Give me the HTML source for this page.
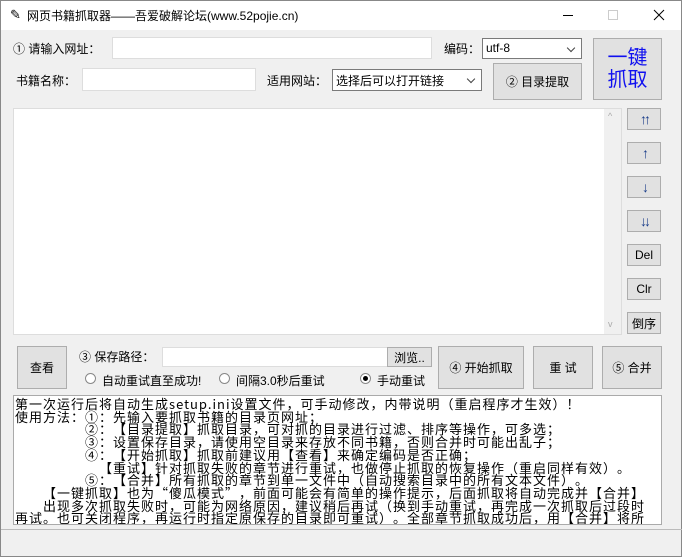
<!DOCTYPE html>
<html><head><meta charset="utf-8"><style>
*{box-sizing:border-box;margin:0;padding:0}
body{width:682px;height:557px;background:#f0f0f0;font-family:"Liberation Sans","Noto Sans CJK SC",sans-serif;font-size:12px;color:#000;position:relative;overflow:hidden;border:1px solid #888}
.a{position:absolute}
.tb{left:0;top:0;width:680px;height:29px;background:#fff}
.in{position:absolute;background:#fff;border:1px solid #7a7a7a}
.btn{position:absolute;background:#e1e1e1;border:1px solid #adadad;display:flex;align-items:center;justify-content:center;font-size:12px}
.sel{position:absolute;background:#fff;border:1px solid #7a7a7a;padding:2px 3px;font-size:12px}
.sel:after{content:"";position:absolute;right:7px;top:6px;width:5px;height:5px;border-right:1px solid #444;border-bottom:1px solid #444;transform:rotate(45deg)}
.rad{position:absolute;width:11px;height:11px;border:1px solid #888;border-radius:50%;background:#fff}
.ta{left:12px;top:394px;width:649px;height:130px;background:#fff;border:1px solid #aaa;font-family:"Noto Sans CJK SC",sans-serif;font-size:13px;line-height:12.7px;padding:2px 1px;white-space:pre;overflow:hidden;letter-spacing:1px;text-spacing-trim:space-all}
.arr{color:#1a3d8a;font-size:14px;font-weight:bold;letter-spacing:-3px}
</style></head><body>
<div class="a tb"></div>
<div class="a" style="left:9px;top:6px;font-size:13px">✎</div>
<div class="a" style="left:26px;top:6px;font-size:12px">网页书籍抓取器——吾爱破解论坛(www.52pojie.cn)</div>
<div class="a" style="left:562px;top:14px;width:10px;height:1px;background:#000"></div>
<div class="a" style="left:607px;top:9px;width:10px;height:10px;border:1px solid #ccc"></div>
<svg class="a" style="left:652px;top:8px" width="12" height="12"><path d="M1 1L11 11M11 1L1 11" stroke="#000" stroke-width="1"/></svg>

<div class="a" style="left:12px;top:39px">① 请输入网址：</div>
<div class="in" style="left:111px;top:36px;width:320px;height:22px;border-color:#ddd"></div>
<div class="a" style="left:443px;top:39px">编码：</div>
<div class="sel" style="left:481px;top:37px;width:100px;height:21px">utf-8</div>
<div class="btn" style="left:592px;top:37px;width:69px;height:62px;color:#1010f0;font-size:20px;line-height:22px;text-align:center">一键<br>抓取</div>

<div class="a" style="left:15px;top:71px">书籍名称：</div>
<div class="in" style="left:81px;top:67px;width:174px;height:23px;border-color:#ddd"></div>
<div class="a" style="left:266px;top:71px">适用网站：</div>
<div class="sel" style="left:331px;top:68px;width:150px;height:22px">选择后可以打开链接</div>
<div class="btn" style="left:492px;top:62px;width:89px;height:37px">② 目录提取</div>

<div class="in" style="left:12px;top:107px;width:609px;height:227px;border-color:#ddd"></div>
<div class="a" style="left:603px;top:108px;width:17px;height:225px;background:#f0f0f0"></div>
<div class="a" style="left:607px;top:110px;color:#aaa;font-size:9px">^</div>
<div class="a" style="left:607px;top:318px;color:#aaa;font-size:9px">v</div>

<div class="btn arr" style="left:626px;top:107px;width:34px;height:22px">↑↑</div>
<div class="btn arr" style="left:626px;top:141px;width:34px;height:22px">↑</div>
<div class="btn arr" style="left:626px;top:175px;width:34px;height:22px">↓</div>
<div class="btn arr" style="left:626px;top:209px;width:34px;height:22px">↓↓</div>
<div class="btn" style="left:626px;top:243px;width:34px;height:22px">Del</div>
<div class="btn" style="left:626px;top:277px;width:34px;height:22px">Clr</div>
<div class="btn" style="left:626px;top:311px;width:34px;height:22px">倒序</div>

<div class="btn" style="left:16px;top:345px;width:50px;height:43px">查看</div>
<div class="a" style="left:78px;top:347px">③ 保存路径：</div>
<div class="in" style="left:161px;top:346px;width:226px;height:20px;border-color:#ddd"></div>
<div class="btn" style="left:386px;top:346px;width:45px;height:20px">浏览..</div>
<div class="rad" style="left:84px;top:372px"></div><div class="a" style="left:101px;top:371px">自动重试直至成功!</div>
<div class="rad" style="left:218px;top:372px"></div><div class="a" style="left:235px;top:371px">间隔3.0秒后重试</div>
<div class="rad" style="left:359px;top:372px"><div style="width:5px;height:5px;background:#000;border-radius:50%;margin:2px"></div></div><div class="a" style="left:376px;top:371px">手动重试</div>
<div class="btn" style="left:437px;top:345px;width:86px;height:43px">④ 开始抓取</div>
<div class="btn" style="left:532px;top:345px;width:60px;height:43px">重 试</div>
<div class="btn" style="left:601px;top:345px;width:60px;height:43px">⑤ 合并</div>

<div class="a ta">第一次运行后将自动生成setup.ini设置文件，可手动修改，内带说明（重启程序才生效）！
使用方法：①：先输入要抓取书籍的目录页网址；
　　　　　②：【目录提取】抓取目录，可对抓的目录进行过滤、排序等操作，可多选；
　　　　　③：设置保存目录，请使用空目录来存放不同书籍，否则合并时可能出乱子；
　　　　　④：【开始抓取】抓取前建议用【查看】来确定编码是否正确；
　　　　　　【重试】针对抓取失败的章节进行重试，也做停止抓取的恢复操作（重启同样有效）。
　　　　　⑤：【合并】所有抓取的章节到单一文件中（自动搜索目录中的所有文本文件）。
　　【一键抓取】也为“傻瓜模式”，前面可能会有简单的操作提示，后面抓取将自动完成并【合并】
　　出现多次抓取失败时，可能为网络原因，建议稍后再试（换到手动重试，再完成一次抓取后过段时
再试。也可关闭程序，再运行时指定原保存的目录即可重试）。全部章节抓取成功后，用【合并】将所</div>
<div class="a" style="left:644px;top:395px;width:16px;height:128px;background:#fff"></div>
<div class="a" style="left:0;top:528px;width:682px;height:1px;background:#bbb"></div>
</body></html>
